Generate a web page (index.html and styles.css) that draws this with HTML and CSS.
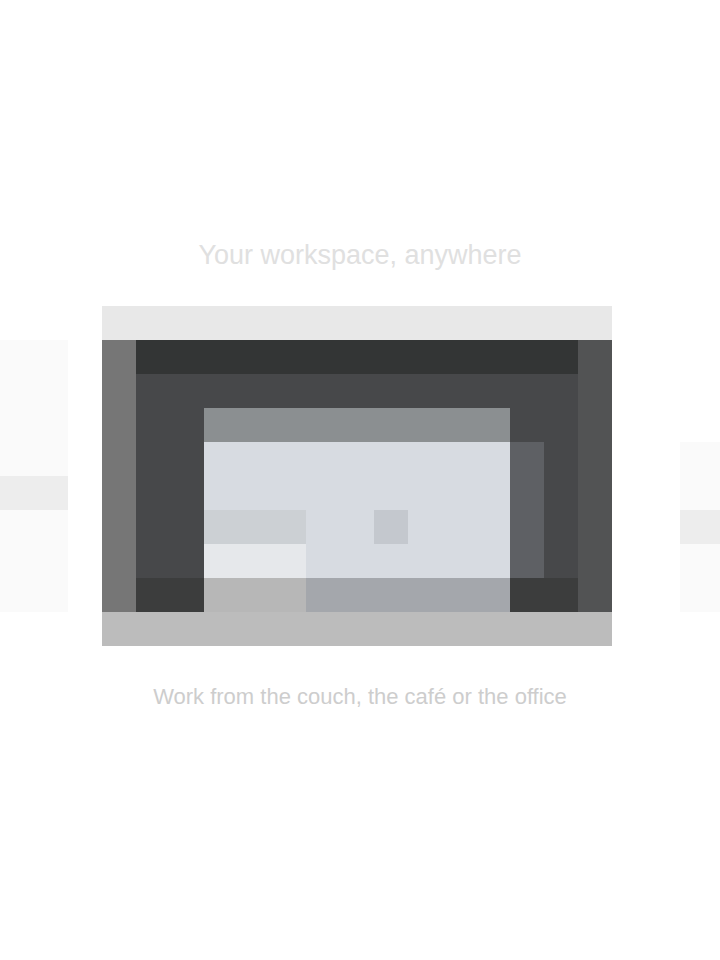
FILE: index.html
```html
<!DOCTYPE html>
<html lang="en">
<head>
<meta charset="utf-8">
<title>Gallery</title>
<link rel="stylesheet" href="styles.css">
</head>
<body>
<main class="page">
  <h1 class="title">Your workspace, anywhere</h1>
  <div class="stage">
    <div class="peek peek-left">
      <div class="peek-line"></div>
    </div>
    <figure class="frame">
      <div class="frame-top"></div>
      <div class="frame-mid">
        <div class="edge edge-l"></div>
        <div class="screen">
          <div class="screen-bar"></div>
          <div class="screen-body">
            <div class="panel">
              <div class="panel-top"></div>
              <div class="panel-body">
                <div class="panel-row">
                  <span class="chip chip-a"></span>
                  <span class="chip chip-b"></span>
                </div>
                <div class="panel-row panel-row-low">
                  <span class="chip chip-c"></span>
                </div>
              </div>
              <div class="panel-bottom">
                <span class="chip chip-d"></span>
              </div>
            </div>
            <div class="shade"></div>
          </div>
          <div class="screen-foot"></div>
        </div>
        <div class="edge edge-r"></div>
      </div>
      <div class="frame-bottom"></div>
    </figure>
    <div class="peek peek-right">
      <div class="peek-line"></div>
    </div>
  </div>
  <p class="caption">Work from the couch, the café or the office</p>
</main>
</body>
</html>
```
FILE: styles.css
```css
* { box-sizing: border-box; }
html, body { margin: 0; padding: 0; background: #ffffff; }
body { font-family: "Liberation Sans", Arial, sans-serif; }

.page {
  width: 720px;
  height: 960px;
  padding-top: 238px;
  display: flex;
  flex-direction: column;
  align-items: center;
}

.title {
  margin: 0;
  height: 34px;
  line-height: 34px;
  font-size: 27px;
  font-weight: 400;
  color: #e0e0e0;
}

.stage {
  margin-top: 34px;
  width: 720px;
  display: grid;
  grid-template-columns: 68px 34px 510px 68px 40px;
  align-items: start;
}

.peek { background: #fafafa; display: flex; flex-direction: column; }
.peek-left { grid-column: 1; margin-top: 34px; height: 272px; padding-top: 136px; }
.peek-right { grid-column: 5; margin-top: 136px; height: 170px; padding-top: 68px; }
.peek-line { height: 34px; background: #ededed; }

.frame {
  grid-column: 3;
  margin: 0;
  width: 510px;
  height: 340px;
  display: flex;
  flex-direction: column;
}
.frame-top { height: 34px; background: #e8e8e8; }
.frame-mid { height: 272px; display: flex; }
.frame-bottom { height: 34px; background: #bcbcbc; }

.edge { width: 34px; }
.edge-l { background: #767676; }
.edge-r { background: #525354; }

.screen { flex: 1; background: #47484a; display: flex; flex-direction: column; position: relative; }
.screen-bar { height: 34px; background: #333535; }
.screen-body { flex: 1; display: flex; padding: 34px 0 0 68px; position: relative; z-index: 1; }
.screen-foot {
  position: absolute;
  left: 0; right: 0; bottom: 0;
  height: 34px;
  background: #3c3d3d;
}

.panel { width: 306px; display: flex; flex-direction: column; }
.panel-top { height: 34px; background: #8b8f91; }
.panel-body {
  height: 136px;
  background: #d7dbe1;
  display: flex;
  flex-direction: column;
  padding-top: 68px;
}
.panel-row { height: 34px; display: flex; }
.chip { display: block; height: 34px; }
.chip-a { width: 102px; background: #ccd0d4; }
.chip-b { width: 34px; margin-left: 68px; background: #c4c8ce; }
.chip-c { width: 102px; background: #e6e8eb; }
.panel-bottom { height: 34px; background: #a4a7ac; display: flex; }
.chip-d { width: 102px; background: #b7b7b7; }

.shade { width: 34px; margin-top: 34px; height: 136px; background: #5e6064; }

.caption {
  margin: 34px 0 0;
  height: 34px;
  line-height: 34px;
  font-size: 22px;
  color: #cdcdcd;
}
```
